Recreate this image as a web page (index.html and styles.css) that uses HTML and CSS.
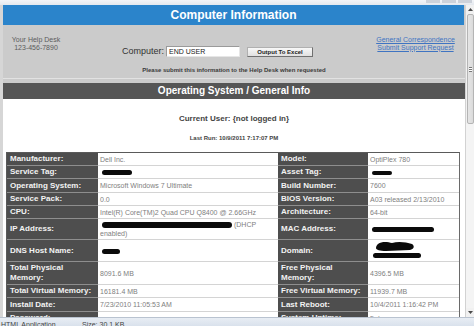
FILE: index.html
```html
<!DOCTYPE html>
<html lang="en">
<head>
<meta charset="utf-8">
<title>Computer Information</title>
<link rel="stylesheet" href="styles.css">
</head>
<body>
<div class="window">
  <div class="toolbar-edge"><span class="tb-block"></span><span class="tb-block"></span><span class="tb-block"></span></div>
  <div class="frame">
    <div class="viewport">
      <div class="page">
        <header class="title-bar">Computer Information</header>
        <section class="info-panel">
          <div class="info-row">
            <div class="helpdesk">Your Help Desk<br>123-456-7890</div>
            <div class="computer">
              <span class="comp-label">Computer:</span>
              <span class="field">END USER</span>
              <span class="btn">Output To Excel</span>
            </div>
            <div class="links">
              <a href="#">General Correspondence</a>
              <a href="#">Submit Support Request</a>
            </div>
          </div>
          <div class="notice">Please submit this information to the Help Desk when requested</div>
        </section>
        <h2 class="section-bar">Operating System / General Info</h2>
        <div class="content">
          <p class="current-user">Current User: {not logged in}</p>
          <p class="last-run">Last Run: 10/9/2011 7:17:07 PM</p>
          <table class="specs">
            <colgroup><col class="c-l1"><col class="c-v1"><col class="c-l2"><col class="c-v2"></colgroup>
            <tr>
              <th>Manufacturer:</th><td>Dell Inc.</td>
              <th>Model:</th><td>OptiPlex 780</td>
            </tr>
            <tr>
              <th>Service Tag:</th><td><span class="redact rd-tag"></span></td>
              <th>Asset Tag:</th><td><span class="redact rd-asset"></span></td>
            </tr>
            <tr class="h14">
              <th>Operating System:</th><td>Microsoft Windows 7 Ultimate</td>
              <th>Build Number:</th><td>7600</td>
            </tr>
            <tr>
              <th>Service Pack:</th><td>0.0</td>
              <th>BIOS Version:</th><td>A03 released 2/13/2010</td>
            </tr>
            <tr>
              <th>CPU:</th><td>Intel(R) Core(TM)2 Quad CPU Q8400 @ 2.66GHz</td>
              <th>Architecture:</th><td>64-bit</td>
            </tr>
            <tr class="h21">
              <th>IP Address:</th><td><span class="redact rd-ip"></span> (DHCP enabled)</td>
              <th>MAC Address:</th><td><span class="redact rd-mac"></span></td>
            </tr>
            <tr class="h22">
              <th>DNS Host Name:</th><td><span class="redact rd-dns"></span></td>
              <th>Domain:</th>
              <td>
                <svg class="rd-dom" width="50" height="19" viewBox="0 0 50 19" aria-hidden="true">
                  <path d="M6 3 C10 0 16 1 20 2 C26 0 34 1 40 3 C43 5 42 8 38 9 C30 9 22 10 14 10 C8 10 4 9 4 7 C4 5 5 4 6 3 Z" fill="#0b0b0b"/>
                  <rect x="1" y="12" width="48" height="5" rx="2.5" fill="#0b0b0b"/>
                </svg>
              </td>
            </tr>
            <tr class="h23">
              <th>Total Physical<br>Memory:</th><td>8091.6 MB</td>
              <th>Free Physical<br>Memory:</th><td>4396.5 MB</td>
            </tr>
            <tr>
              <th>Total Virtual Memory:</th><td>16181.4 MB</td>
              <th>Free Virtual Memory:</th><td>11939.7 MB</td>
            </tr>
            <tr class="h14">
              <th>Install Date:</th><td>7/23/2010 11:05:53 AM</td>
              <th>Last Reboot:</th><td>10/4/2011 1:16:42 PM</td>
            </tr>
            <tr>
              <th>Password:</th><td></td>
              <th>System Uptime:</th><td>5 days</td>
            </tr>
          </table>
        </div>
      </div>
    </div>
    <div class="scrollbar">
      <div class="sb-btn">
        <svg width="5" height="3" viewBox="0 0 5 3" aria-hidden="true"><path d="M0 3 L2.5 0 L5 3 Z" fill="#4a4a4a"/></svg>
      </div>
      <div class="sb-thumb"><span class="sb-grip"></span></div>
      <div class="sb-track"></div>
      <div class="sb-btn">
        <svg width="5" height="3" viewBox="0 0 5 3" aria-hidden="true"><path d="M0 0 L5 0 L2.5 3 Z" fill="#4a4a4a"/></svg>
      </div>
    </div>
  </div>
  <footer class="statusbar">
    <span class="status-app">HTML Application</span>
    <span class="status-size">Size: 30.1 KB</span>
  </footer>
</div>
</body>
</html>
```

FILE: styles.css
```css
* {
  box-sizing: border-box;
  margin: 0;
  padding: 0;
}

html, body {
  width: 474px;
  height: 326px;
  overflow: hidden;
}

body {
  font-family: "Liberation Sans", Arial, sans-serif;
  background: #dcdcdc;
}

.window {
  display: flex;
  flex-direction: column;
  width: 474px;
  height: 326px;
}

.toolbar-edge {
  height: 5px;
  background: linear-gradient(#f3f5f8, #e4e8ee);
  display: flex;
  justify-content: flex-end;
  gap: 2px;
  padding-right: 2px;
}

.tb-block {
  width: 14px;
  height: 3px;
  background: #cdd2da;
}

.frame {
  display: flex;
  height: 312px;
}

.viewport {
  flex: 1;
  overflow: hidden;
  background: #d6d6d6;
  padding-left: 3px;
}

.page {
  width: 462px;
  background: #cbcbcb;
}

.title-bar {
  height: 20px;
  margin-right: 1px;
  background: #2b84cb;
  color: #ffffff;
  font-weight: bold;
  font-size: 12px;
  line-height: 20px;
  text-align: center;
}

.info-panel {
  height: 54px;
  background: #cbcbcb;
  border-bottom: 1px solid #e2e2e2;
}

.info-row {
  display: grid;
  grid-template-columns: 66px 1fr 99px;
  height: 41px;
}

.helpdesk {
  padding-top: 11px;
  text-align: center;
  font-size: 7px;
  line-height: 8px;
  color: #5c5c5c;
}

.computer {
  display: flex;
  align-items: center;
  justify-content: center;
  padding-top: 21px;
  height: 32px;
}

.comp-label {
  font-size: 9px;
  line-height: 11px;
  color: #333333;
  margin-right: 2px;
}

.field {
  width: 74px;
  height: 11px;
  background: #ffffff;
  border: 1px solid #9a9a9a;
  border-right-color: #e6e6e6;
  border-bottom-color: #e6e6e6;
  font-size: 7px;
  line-height: 9px;
  padding-left: 2px;
  color: #222222;
}

.btn {
  width: 66px;
  height: 10px;
  margin-left: 7px;
  background: linear-gradient(#f8f8f8, #e0e0e0);
  border: 1px solid #b0b0b0;
  border-right-color: #707070;
  border-bottom-color: #707070;
  font-weight: bold;
  font-size: 6px;
  line-height: 8px;
  text-align: center;
  color: #222222;
}

.links {
  display: flex;
  flex-direction: column;
  align-items: center;
  padding-top: 11px;
}

.links a {
  font-size: 7px;
  line-height: 7.5px;
  color: #3f74c2;
  text-decoration: underline;
}

.notice {
  text-align: center;
  font-weight: bold;
  font-size: 6px;
  line-height: 8px;
  color: #3a3a3a;
}

.section-bar {
  margin-top: 4px;
  height: 16px;
  background: #555555;
  color: #ffffff;
  font-weight: bold;
  font-size: 10px;
  line-height: 16px;
  text-align: center;
}

.content {
  background: #ffffff;
  padding-top: 14px;
  height: 260px;
}

.current-user {
  text-align: center;
  font-weight: bold;
  font-size: 8px;
  line-height: 12px;
  color: #444444;
}

.last-run {
  margin-top: 9px;
  text-align: center;
  font-weight: bold;
  font-size: 6px;
  line-height: 8px;
  color: #444444;
}

.specs {
  width: 454px;
  margin: 10px 0 0 3px;
  border-collapse: separate;
  border-spacing: 0;
  table-layout: fixed;
  border: 1px solid #5a5a5a;
  border-right-color: #6a6a6a;
}

.c-l1 { width: 91px; }
.c-v1 { width: 180px; }
.c-l2 { width: 90px; }
.c-v2 { width: 91px; }

.specs tr {
  height: 13px;
}

.specs tr.h14 { height: 14px; }
.specs tr.h21 { height: 21px; }
.specs tr.h22 { height: 22px; }
.specs tr.h23 { height: 23px; }

.specs th {
  background: #4e4e4e;
  color: #f3f3f3;
  font-weight: bold;
  font-size: 8px;
  line-height: 10px;
  text-align: left;
  padding: 0 3px;
  border-bottom: 1px solid #8e8e8e;
  vertical-align: middle;
  white-space: nowrap;
}

.specs td {
  background: #ffffff;
  color: #808080;
  font-size: 7px;
  line-height: 9px;
  padding: 0 2px;
  border-bottom: 1px solid #d4d4d4;
  vertical-align: middle;
}

.redact {
  display: inline-block;
  background: #0b0b0b;
  border-radius: 3px;
  vertical-align: middle;
}

.rd-tag { width: 30px; height: 5px; margin-left: 2px; }
.rd-asset { width: 20px; height: 4px; margin-left: 2px; }
.rd-ip { width: 130px; height: 6px; margin-left: 2px; }
.rd-mac { width: 62px; height: 5px; margin-left: 2px; }
.rd-dns { width: 18px; height: 5px; margin-left: 2px; }

.rd-dom {
  display: block;
  margin-left: 2px;
}

.scrollbar {
  width: 9px;
  background: #f1f1f1;
  border-left: 1px solid #d2d2d2;
  display: flex;
  flex-direction: column;
}

.sb-btn {
  height: 9px;
  display: flex;
  align-items: center;
  justify-content: center;
}

.sb-thumb {
  height: 110px;
  margin: 0 0.5px;
  background: linear-gradient(90deg, #e6e6e6, #dadada);
  border: 1px solid #b4b4b4;
  border-radius: 2px;
  display: flex;
  align-items: center;
  justify-content: center;
}

.sb-grip {
  width: 3px;
  height: 5px;
  border-top: 1px solid #777;
  border-bottom: 1px solid #777;
  background: linear-gradient(#fff 0 33%, #777 33% 66%, #fff 66%);
}

.sb-track {
  flex: 1;
  background: #f4f4f4;
}

.statusbar {
  height: 9px;
  background: linear-gradient(#e8edf4, #d9e1ec);
  border-top: 1px solid #b9c3d0;
  display: flex;
  overflow: hidden;
  padding-top: 2px;
  font-size: 7px;
  line-height: 9px;
  color: #444444;
}

.status-app {
  width: 82px;
  padding-left: 1px;
}
```
